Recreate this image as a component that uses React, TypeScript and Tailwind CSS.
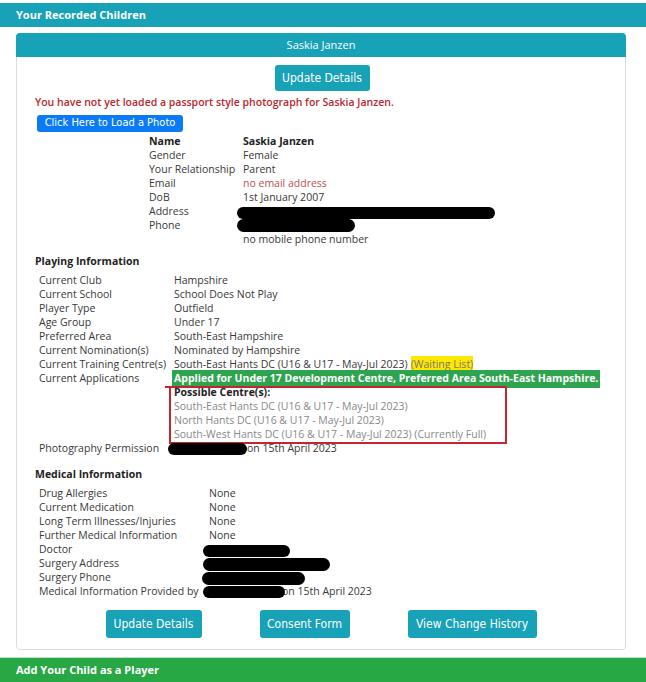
import React from "react";

const body = { fontFamily: '"Open Sans", "Noto Sans", sans-serif' };
const narrow = { fontFamily: '"DejaVu Sans Condensed", "Liberation Sans", sans-serif' };

function Pill({ className }: { className: string }) {
  return <div className={`absolute bg-black rounded-full ${className}`} />;
}

function Row({
  label,
  children,
  labelW,
  labelClass = "",
}: {
  label: string;
  children?: React.ReactNode;
  labelW: string;
  labelClass?: string;
}) {
  return (
    <div className="flex h-[14px] items-center">
      <div className={`${labelW} shrink-0 whitespace-nowrap ${labelClass}`}>{label}</div>
      <div className="relative flex-1 h-full flex items-center whitespace-nowrap">{children}</div>
    </div>
  );
}

function TealButton({ children, w }: { children: React.ReactNode; w: string }) {
  return (
    <div
      className={`${w} h-[28px] rounded-[3px] bg-[#17a2b8] text-white text-[12px] flex items-center justify-center`}
      style={narrow}
    >
      {children}
    </div>
  );
}

export default function App() {
  return (
    <div className="w-[646px] h-[682px] bg-white overflow-hidden text-[10.5px] text-[#383838]" style={body}>
      <div className="mt-[3px] h-[24px] bg-[#17a2b8] px-4 flex items-center text-white font-bold text-[11px]">
        Your Recorded Children
      </div>

      <div className="ml-4 mt-[6px] w-[610px] border border-[#dcdcdc] rounded-[4px]">
        <div className="h-[24px] -mx-px -mt-px bg-[#17a2b8] rounded-t-[4px] flex items-center justify-center text-white text-[11px]">
          Saskia Janzen
        </div>

        <div className="pl-[18px] pr-4 pb-[11px]">
          <div className="flex justify-center mt-[8px]">
            <div
              className="w-[95px] h-[26px] rounded-[3px] bg-[#17a2b8] text-white text-[12px] flex items-center justify-center"
              style={narrow}
            >
              Update Details
            </div>
          </div>

          <div className="mt-[5px] h-[14px] flex items-center font-semibold text-[#b8282e]">
            You have not yet loaded a passport style photograph for Saskia Janzen.
          </div>

          <div
            className="mt-[5px] ml-[2px] w-[146px] h-[17px] rounded-[3px] bg-[#0a7bf5] text-white text-[11px] flex items-center justify-center"
            style={narrow}
          >
            Click Here to Load a Photo
          </div>

          <div className="mt-[3px] ml-[114px]">
            <Row label="Name" labelW="w-[94px]" labelClass="font-bold text-[#222]">
              <span className="font-bold text-[#222]">Saskia Janzen</span>
            </Row>
            <Row label="Gender" labelW="w-[94px]">Female</Row>
            <Row label="Your Relationship" labelW="w-[94px]">Parent</Row>
            <Row label="Email" labelW="w-[94px]">
              <span className="text-[#c0504d]">no email address</span>
            </Row>
            <Row label="DoB" labelW="w-[94px]">1st January 2007</Row>
            <Row label="Address" labelW="w-[94px]">
              <Pill className="-left-[6px] top-[2px] w-[258px] h-[12px]" />
            </Row>
            <Row label="Phone" labelW="w-[94px]">
              <Pill className="-left-[6px] top-[0px] w-[118px] h-[13px]" />
            </Row>
            <Row label="" labelW="w-[94px]">no mobile phone number</Row>
          </div>

          <div className="mt-[8px] h-[14px] flex items-center font-bold text-[#222]">Playing Information</div>

          <div className="mt-[5px] ml-[4px]">
            <Row label="Current Club" labelW="w-[135px]">Hampshire</Row>
            <Row label="Current School" labelW="w-[135px]">School Does Not Play</Row>
            <Row label="Player Type" labelW="w-[135px]">Outfield</Row>
            <Row label="Age Group" labelW="w-[135px]">Under 17</Row>
            <Row label="Preferred Area" labelW="w-[135px]">South-East Hampshire</Row>
            <Row label="Current Nomination(s)" labelW="w-[135px]">Nominated by Hampshire</Row>
            <Row label="Current Training Centre(s)" labelW="w-[135px]">
              <span>South-East Hants DC (U16 &amp; U17 - May-Jul 2023)</span>
              <span className="ml-[3px] bg-[#ffe800] text-[#777] py-[1px]">(Waiting List)</span>
            </Row>
            <Row label="Current Applications" labelW="w-[135px]">
              <span className="-ml-[2px] px-[2px] py-[1px] bg-[#2ea44f] text-white font-bold">
                Applied for Under 17 Development Centre, Preferred Area South-East Hampshire.
              </span>
            </Row>
            <div className="flex">
              <div className="w-[135px] shrink-0" />
              <div className="relative">
                <div className="h-[14px] flex items-center font-bold text-[#222]">Possible Centre(s):</div>
                <div className="text-[#888]">
                  <div className="h-[14px] flex items-center">South-East Hants DC (U16 &amp; U17 - May-Jul 2023)</div>
                  <div className="h-[14px] flex items-center">North Hants DC (U16 &amp; U17 - May-Jul 2023)</div>
                  <div className="h-[14px] flex items-center">
                    South-West Hants DC (U16 &amp; U17 - May-Jul 2023) (Currently Full)
                  </div>
                </div>
                <div className="absolute -left-[5px] top-[0px] w-[338px] h-[58px] border-[2px] border-[#c4262e]" />
                <div className="absolute -left-[9px] top-[0px] w-[8px] h-[2px] bg-[#c4262e]" />
              </div>
            </div>
            <Row label="Photography Permission" labelW="w-[129px]">
              <div className="w-[79px] h-[12px] bg-black rounded-full" />
              <span>on 15th April 2023</span>
            </Row>
          </div>

          <div className="mt-[12px] h-[14px] flex items-center font-bold text-[#222]">Medical Information</div>

          <div className="mt-[5px] ml-[4px]">
            <Row label="Drug Allergies" labelW="w-[170px]">None</Row>
            <Row label="Current Medication" labelW="w-[170px]">None</Row>
            <Row label="Long Term Illnesses/Injuries" labelW="w-[170px]">None</Row>
            <Row label="Further Medical Information" labelW="w-[170px]">None</Row>
            <Row label="Doctor" labelW="w-[170px]">
              <Pill className="-left-[6px] top-[2px] w-[87px] h-[12px]" />
            </Row>
            <Row label="Surgery Address" labelW="w-[170px]">
              <Pill className="-left-[6px] top-[1px] w-[127px] h-[13px]" />
            </Row>
            <Row label="Surgery Phone" labelW="w-[170px]">
              <Pill className="-left-[7px] top-[1px] w-[103px] h-[13px]" />
            </Row>
            <Row label="Medical Information Provided by" labelW="w-[164px]">
              <div className="w-[82px] h-[12px] bg-black rounded-full z-10" />
              <span className="-ml-[3px]">on 15th April 2023</span>
            </Row>
          </div>

          <div className="mt-[11px] flex justify-center gap-[58px] -ml-[2px]">
            <TealButton w="w-[96px]">Update Details</TealButton>
            <TealButton w="w-[90px]">Consent Form</TealButton>
            <TealButton w="w-[129px]">View Change History</TealButton>
          </div>
        </div>
      </div>

      <div className="mt-[7px] h-[1px] bg-[#b9e3c3]" />
      <div className="h-[24px] bg-[#28a745] px-4 flex items-center text-white font-bold text-[11px]">
        Add Your Child as a Player
      </div>
    </div>
  );
}
